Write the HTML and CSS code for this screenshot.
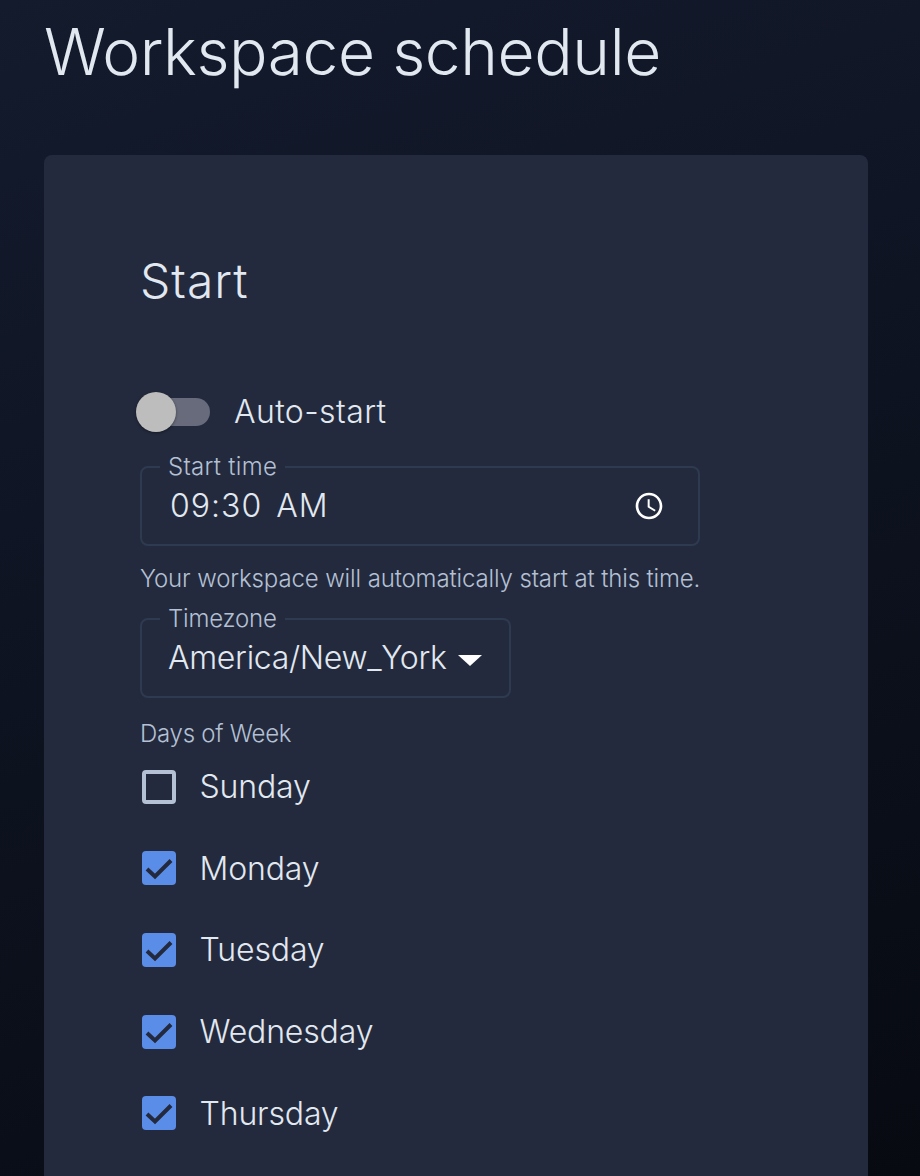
FILE: index.html
```html
<!DOCTYPE html>
<html lang="en">
<head>
  <meta charset="UTF-8" />
  <meta name="viewport" content="width=device-width, initial-scale=1.0"/>
  <title>Workspace schedule</title>
  <link rel="stylesheet" href="styles.css">
</head>
<body>
  <h1 class="page-title">Workspace schedule</h1>
  <div class="card">
    <h2 class="section-title">Start</h2>

    <label class="switch-row">
      <span class="switch"><span class="switch-thumb"></span></span>
      <span>Auto-start</span>
    </label>

    <fieldset class="field field-time">
      <legend>Start time</legend>
      <span class="field-value time-value">09:30 AM</span>
      <svg class="clock" width="32" height="32" viewBox="0 0 24 24" fill="#fff">
        <path d="M11.99 2C6.47 2 2 6.48 2 12s4.47 10 9.99 10C17.52 22 22 17.52 22 12S17.52 2 11.99 2zM12 20c-4.42 0-8-3.58-8-8s3.58-8 8-8 8 3.58 8 8-3.58 8-8 8z"/>
        <path d="M12.5 7H11v6l5.25 3.15.75-1.23-4.5-2.67z"/>
      </svg>
    </fieldset>
    <p class="helper">Your workspace will automatically start at this time.</p>

    <fieldset class="field field-zone">
      <legend>Timezone</legend>
      <span class="field-value">America/New_York</span>
      <span class="caret"></span>
    </fieldset>

    <div class="days-label">Days of Week</div>
    <ul class="days">
      <li class="day">
        <span class="box"></span>Sunday
      </li>
      <li class="day">
        <span class="box checked"><svg width="34" height="34" viewBox="0 0 34 34"><path d="M5 18l8 7.5L29 9.5" fill="none" stroke="#232a3d" stroke-width="4"/></svg></span>Monday
      </li>
      <li class="day">
        <span class="box checked"><svg width="34" height="34" viewBox="0 0 34 34"><path d="M5 18l8 7.5L29 9.5" fill="none" stroke="#232a3d" stroke-width="4"/></svg></span>Tuesday
      </li>
      <li class="day">
        <span class="box checked"><svg width="34" height="34" viewBox="0 0 34 34"><path d="M5 18l8 7.5L29 9.5" fill="none" stroke="#232a3d" stroke-width="4"/></svg></span>Wednesday
      </li>
      <li class="day">
        <span class="box checked"><svg width="34" height="34" viewBox="0 0 34 34"><path d="M5 18l8 7.5L29 9.5" fill="none" stroke="#232a3d" stroke-width="4"/></svg></span>Thursday
      </li>
    </ul>
  </div>
</body>
</html>
```

FILE: styles.css
```css
html, body {
  margin: 0;
  padding: 0;
  height: 1176px;
  overflow: hidden;
}
body {
  background: linear-gradient(160deg, #141b2d 0%, #0f1524 35%, #070a11 100%);
  font-family: Inter, "Noto Sans", sans-serif;
  color: #e2e8f0;
  padding: 0 52px 0 44px;
  box-sizing: border-box;
}
.page-title {
  margin: 0;
  padding-top: 16px;
  font-size: 64px;
  line-height: 72px;
  letter-spacing: -0.4px;
  font-weight: 300;
  color: #e2e8f0;
}
.card {
  margin-top: 67px;
  height: 1021px;
  background: #232a3d;
  border-radius: 8px 8px 0 0;
  padding: 96px 0 0 96px;
  box-sizing: border-box;
}
.section-title {
  margin: 0;
  font-size: 48px;
  line-height: 60px;
  letter-spacing: 1px;
  font-weight: 300;
}
.switch-row {
  display: flex;
  align-items: center;
  gap: 24px;
  margin-top: 80px;
  font-size: 32px;
  line-height: 42px;
  letter-spacing: 0.4px;
  font-weight: 300;
}
.switch {
  position: relative;
  display: block;
  width: 70px;
  height: 28px;
  border-radius: 14px;
  background: #676b7b;
}
.switch-thumb {
  position: absolute;
  left: -4px;
  top: -6px;
  width: 40px;
  height: 40px;
  border-radius: 50%;
  background: #bdbdbd;
  box-shadow: 0 1px 3px rgba(0, 0, 0, 0.4);
}
.field {
  margin: 0;
  border: 2px solid #2d3a50;
  border-radius: 8px;
  height: 87px;
  padding: 0 26px 8px;
  box-sizing: border-box;
  display: flex;
  align-items: center;
}
.field legend {
  padding: 0 8px;
  margin-left: -8px;
  font-size: 24px;
  line-height: 16px;
  font-weight: 300;
  color: #b4c0d4;
}
.field-time {
  margin-top: 26px;
  width: 560px;
  justify-content: space-between;
  padding-right: 33px;
}
.field-time legend {
  letter-spacing: 0.3px;
}
.field-zone {
  margin-top: 14px;
  width: 371px;
}
.field-zone legend {
  letter-spacing: -0.2px;
}
.field-value {
  font-size: 32px;
  font-weight: 300;
  letter-spacing: -0.3px;
}
.time-value {
  margin-left: 2px;
  word-spacing: 4px;
  letter-spacing: 1px;
}
.caret {
  width: 0;
  height: 0;
  margin-left: 11px;
  margin-top: 6px;
  border-left: 12px solid transparent;
  border-right: 12px solid transparent;
  border-top: 11px solid #fff;
}
.helper {
  margin: 15px 0 0;
  font-size: 24px;
  line-height: 36px;
  letter-spacing: -0.13px;
  font-weight: 300;
  color: #b4c0d4;
}
.days-label {
  margin-top: 18px;
  font-size: 24px;
  line-height: 36px;
  letter-spacing: -0.25px;
  font-weight: 300;
  color: #b4c0d4;
}
.days {
  list-style: none;
  margin: -6px 0 0;
  padding: 0;
}
.day {
  display: flex;
  align-items: center;
  height: 81.6px;
  font-size: 32px;
  letter-spacing: -0.15px;
  font-weight: 300;
  gap: 23.5px;
}
.box {
  width: 34px;
  height: 34px;
  margin-left: 2px;
  box-sizing: border-box;
  border: 4px solid #b4c0d4;
  border-radius: 4px;
  display: block;
}
.box.checked {
  border: 0;
  background: #5a8de8;
}
.box svg {
  display: block;
}
.clock {
  display: block;
}
```
